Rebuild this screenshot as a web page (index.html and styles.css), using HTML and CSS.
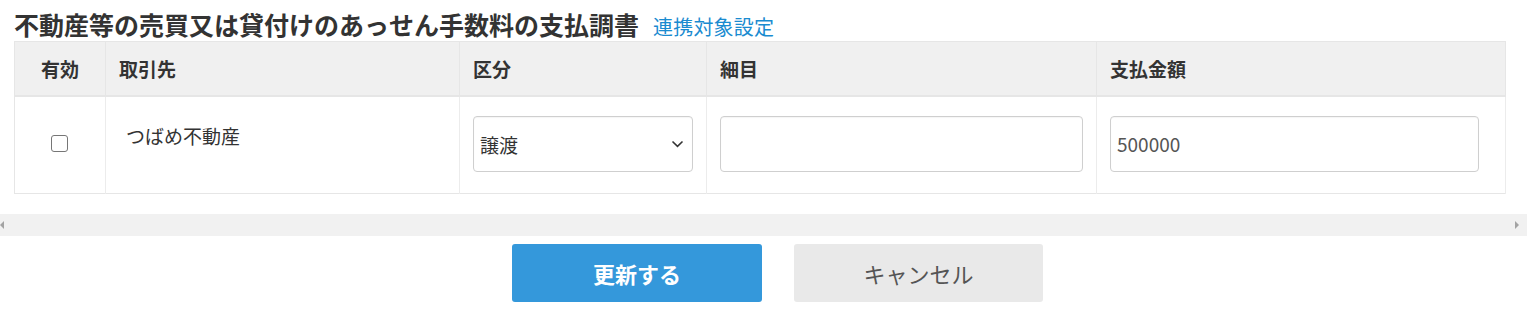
FILE: index.html
```html
<!DOCTYPE html>
<html lang="ja">
<head>
<meta charset="utf-8">
<title>支払調書</title>
<link rel="stylesheet" href="styles.css">
</head>
<body>
<div class="page">
  <div class="heading">
    <h2 class="title">不動産等の売買又は貸付けのあっせん手数料の支払調書</h2>
    <a class="link" href="#">連携対象設定</a>
  </div>
  <div class="scroller">
    <table class="grid">
      <colgroup>
        <col class="c1"><col class="c2"><col class="c3"><col class="c4"><col class="c5">
      </colgroup>
      <thead>
        <tr>
          <th class="center">有効</th>
          <th>取引先</th>
          <th>区分</th>
          <th>細目</th>
          <th>支払金額</th>
        </tr>
      </thead>
      <tbody>
        <tr>
          <td class="center mid"><span class="checkbox"></span></td>
          <td class="name">つばめ不動産</td>
          <td class="mid">
            <div class="select"><span>譲渡</span>
              <svg class="chev" width="13" height="8" viewBox="0 0 13 8"><path d="M1.5 1.5 L6.5 6.3 L11.5 1.5" fill="none" stroke="#333" stroke-width="1.6"/></svg>
            </div>
          </td>
          <td class="mid"><div class="input"></div></td>
          <td class="mid amount-cell"><div class="input amount">500000</div></td>
        </tr>
      </tbody>
    </table>
  </div>
  <div class="hscroll">
    <span class="arrow left"></span>
    <span class="arrow right"></span>
  </div>
  <div class="actions">
    <button class="btn primary">更新する</button>
    <button class="btn secondary">キャンセル</button>
  </div>
</div>
</body>
</html>
```

FILE: styles.css
```css
* { box-sizing: border-box; }
html, body { margin: 0; padding: 0; background: #fff; }
body {
  font-family: "Noto Sans CJK JP", "Noto Sans", sans-serif;
  color: #333;
}
.page { width: 1527px; }
.heading {
  display: flex;
  align-items: baseline;
  gap: 14px;
  padding: 7px 14px 0 14px;
  height: 41px;
}
.title {
  margin: 0;
  font-size: 25px;
  font-weight: 700;
  line-height: 34px;
  color: #333;
  letter-spacing: 0;
}
.link {
  font-size: 20px;
  color: #1a8bd0;
  text-decoration: none;
  letter-spacing: 0.2px;
}
.scroller { padding: 0 22px 0 14px; }
.grid {
  border-collapse: collapse;
  width: 1491px;
  table-layout: fixed;
  border: 1px solid #e6e6e6;
}
.c1 { width: 91px; }
.c2 { width: 354px; }
.c3 { width: 247px; }
.c4 { width: 390px; }
.c5 { width: 409px; }
.grid th {
  background: #f0f0f0;
  height: 54px;
  font-size: 19px;
  font-weight: 700;
  text-align: left;
  padding: 0 13px;
  border-right: 1px solid #e6e6e6;
  border-bottom: 2px solid #e6e6e6;
  color: #333;
}
.grid th.center, .grid td.center { text-align: center; }
.grid td {
  height: 96px;
  padding: 19px 13px 21px 13px;
  border-right: 1px solid #ececec;
  vertical-align: middle;
  font-size: 19px;
}
.grid td.name {
  vertical-align: top;
  padding: 25px 20px 0 20px;
  line-height: 28px;
}
.checkbox {
  display: block;
  width: 17px;
  height: 17px;
  margin: 0 auto;
  border: 1.5px solid #767676;
  border-radius: 3px;
  position: relative;
  left: -1px;
}
.select, .input {
  height: 56px;
  border: 1px solid #cfcfcf;
  border-radius: 4px;
  background: #fff;
  display: flex;
  align-items: center;
  padding: 0 6px;
  font-size: 19px;
  color: #333;
  box-shadow: inset 0 1px 1px rgba(0,0,0,0.04);
}
.select { justify-content: space-between; padding-right: 8px; }
.select span { margin-top: 2px; }
.amount-cell { padding-right: 26px !important; }
.amount { color: #555; }
.hscroll {
  margin-top: 20px;
  height: 22px;
  background: #f1f1f1;
  display: flex;
  justify-content: space-between;
  align-items: center;
  padding: 0 8px 0 0;
}
.arrow { width: 0; height: 0; border-top: 4px solid transparent; border-bottom: 4px solid transparent; }
.arrow.left { border-right: 4px solid #a3a3a3; }
.arrow.right { border-left: 4px solid #a3a3a3; }
.actions {
  display: flex;
  justify-content: center;
  gap: 32px;
  padding-left: 28px;
  margin-top: 8px;
}
.btn {
  width: 250px;
  height: 58px;
  border: none;
  border-radius: 3px;
  font-family: "Noto Sans CJK JP", "Noto Sans", sans-serif;
  font-size: 22px;
}
.btn.primary { background: #3498db; color: #fff; font-weight: 700; }
.btn.secondary { background: #e9e9e9; color: #555; width: 249px; }
```
